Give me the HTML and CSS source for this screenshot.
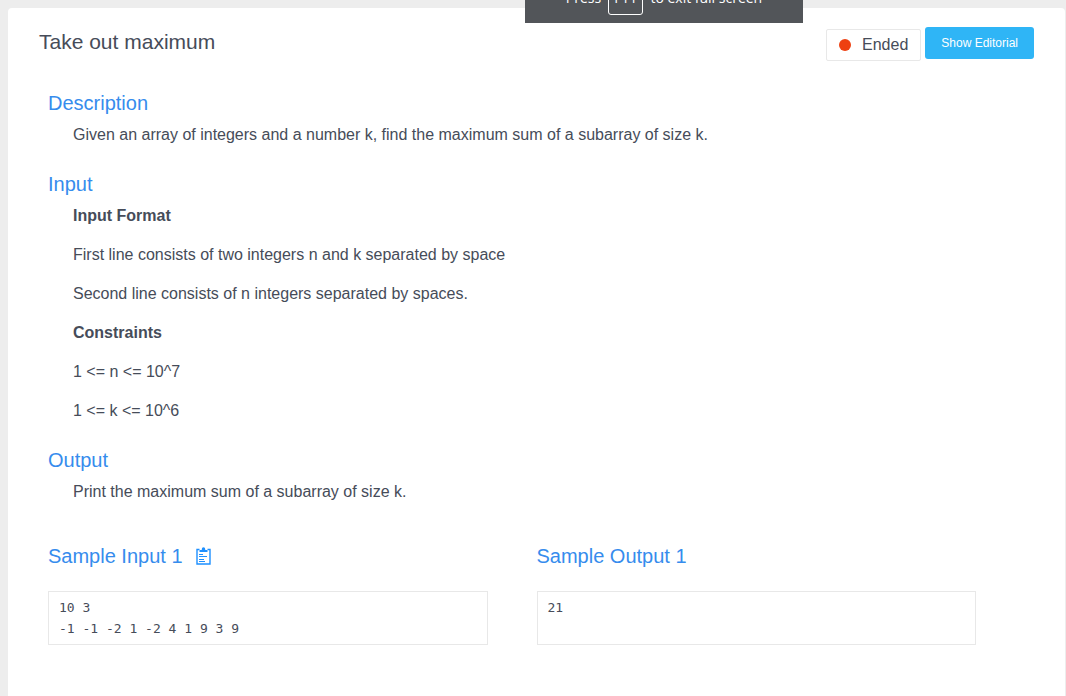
FILE: index.html
```html
<!DOCTYPE html>
<html lang="en">
<head>
<meta charset="utf-8">
<title>Take out maximum</title>
<link rel="stylesheet" href="styles.css">
</head>
<body>
<div class="fullscreen-notice" role="status">
  <span>Press</span><kbd class="key">F11</kbd><span>to exit full screen</span>
</div>
<main class="card">
  <header class="header">
    <h1 class="title">Take out maximum</h1>
    <div class="actions">
      <span class="status"><span class="status-dot"></span>Ended</span>
      <button class="editorial-button" type="button">Show Editorial</button>
    </div>
  </header>
  <div class="problem">
    <section class="section">
      <h2 class="heading">Description</h2>
      <div class="content">
        <p>Given an array of integers and a number k, find the maximum sum of a subarray of size k.</p>
      </div>
    </section>
    <section class="section">
      <h2 class="heading">Input</h2>
      <div class="content">
        <p><strong>Input Format</strong></p>
        <p>First line consists of two integers n and k separated by space</p>
        <p>Second line consists of n integers separated by spaces.</p>
        <p><strong>Constraints</strong></p>
        <p>1 &lt;= n &lt;= 10^7</p>
        <p>1 &lt;= k &lt;= 10^6</p>
      </div>
    </section>
    <section class="section">
      <h2 class="heading">Output</h2>
      <div class="content">
        <p>Print the maximum sum of a subarray of size k.</p>
      </div>
    </section>
    <div class="samples">
      <section class="sample">
        <div class="sample-head">
          <h2 class="heading">Sample Input 1</h2>
          <button class="copy-button" type="button" aria-label="Copy sample input">
            <svg class="copy-icon" viewBox="0 0 15 18" width="15" height="18" aria-hidden="true">
              <path d="M3.500 2.500H1V17h13V2.500h-2.500" fill="none" stroke="#1e90ff" stroke-width="1.400"/>
              <path d="M3.500 5V3h2.300V2a1.700 1.700 0 0 1 3.400 0v1h2.300v2z" fill="#1e90ff"/>
              <path d="M3 7.500h4M3 9.500h8M3 12.500h5M3 14.500h6" fill="none" stroke="#1e90ff"/>
            </svg>
          </button>
        </div>
        <pre class="sample-box">10 3
-1 -1 -2 1 -2 4 1 9 3 9</pre>
      </section>
      <section class="sample">
        <div class="sample-head">
          <h2 class="heading">Sample Output 1</h2>
        </div>
        <pre class="sample-box">21</pre>
      </section>
    </div>
  </div>
</main>
</body>
</html>
```
FILE: styles.css
```css
* {
  box-sizing: border-box;
}

body {
  margin: 0;
  min-height: 100vh;
  padding: 8px 1px 0 8px;
  display: flex;
  flex-direction: column;
  background: #ededed;
  color: #464c59;
  font: 16px/24px "Liberation Sans", Arial, sans-serif;
}

h1,
h2,
p,
pre {
  margin: 0;
}

.card {
  flex: 1;
  padding: 19px 31px 24px;
  background: #fff;
  border-radius: 4px 4px 0 0;
}

.header {
  display: flex;
  justify-content: space-between;
  align-items: flex-start;
}

.title {
  padding-top: 3px;
  font-size: 21px;
  font-weight: 400;
}

.actions {
  display: flex;
  align-items: flex-start;
  gap: 4px;
}

.status {
  display: flex;
  align-items: center;
  gap: 11px;
  height: 32px;
  margin-top: 2px;
  padding: 0 12px;
  border: 1px solid #e8e8e8;
  border-radius: 2px;
}

.status-dot {
  width: 12px;
  height: 12px;
  border-radius: 50%;
  background: #ee4011;
}

.editorial-button {
  height: 32px;
  padding: 0 16px;
  border: 0;
  border-radius: 3px;
  background: #2fb5f6;
  color: #fff;
  font: 12px/24px "Liberation Sans", Arial, sans-serif;
  cursor: pointer;
}

.problem {
  padding: 30px 9px 0;
}

.heading {
  color: #368ced;
  font-size: 20px;
  font-weight: 400;
  line-height: 24px;
}

.content {
  padding: 8px 25px 10px;
}

.content p {
  margin-bottom: 15px;
}

.samples {
  display: grid;
  grid-template-columns: 1fr 1fr;
  padding-top: 15px;
}

.sample {
  display: flex;
  flex-direction: column;
  gap: 23px;
  padding-right: 49px;
}

.sample-head {
  display: flex;
  align-items: center;
  gap: 13px;
}

.copy-button {
  display: flex;
  padding: 0;
  border: 0;
  background: none;
  cursor: pointer;
}

.sample-box {
  flex: 1;
  padding: 5px 10px;
  border: 1px solid #e8e8e8;
  font: 13px/21px "DejaVu Sans Mono", Consolas, monospace;
}

.fullscreen-notice {
  position: absolute;
  top: -29px;
  left: 525px;
  width: 278px;
  height: 52px;
  padding-top: 2px;
  display: flex;
  align-items: center;
  justify-content: center;
  gap: 7px;
  background: #525559;
  color: #fff;
  font: 500 14px/20px "Open Sans", "Noto Sans", sans-serif;
}

.key {
  height: 36px;
  margin-bottom: 2px;
  padding: 8px 5px 6px;
  border: 1px solid #fff;
  border-radius: 3px;
  font: inherit;
}
```
